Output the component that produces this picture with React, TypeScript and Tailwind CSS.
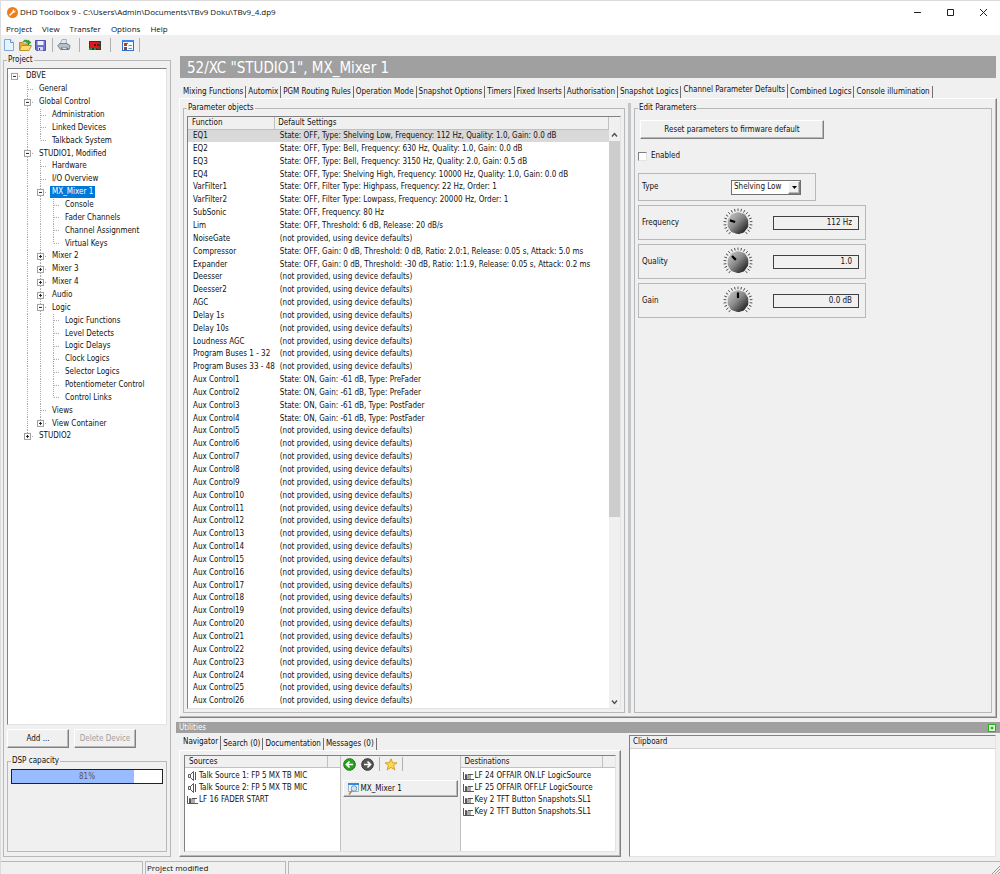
import { useState } from "react";
import type { ReactNode } from "react";

const raised =
  "border border-t-white border-l-white border-r-[#808080] border-b-[#808080] shadow-[inset_-1px_-1px_0_#b8b8b8]";
const sunken = "border border-t-[#808080] border-l-[#808080] border-r-[#e3e3e3] border-b-[#e3e3e3]";
const group = "min-w-0 border border-[#b8b8b8]";
const legendText = "px-px leading-[10px]";

type Node = { label: string; depth: number; state?: "open" | "closed"; last?: boolean };

const tree: Node[] = [
  { label: "DBVE", depth: 0, state: "open" },
  { label: "General", depth: 1 },
  { label: "Global Control", depth: 1, state: "open" },
  { label: "Administration", depth: 2 },
  { label: "Linked Devices", depth: 2 },
  { label: "Talkback System", depth: 2, last: true },
  { label: "STUDIO1, Modified", depth: 1, state: "open" },
  { label: "Hardware", depth: 2 },
  { label: "I/O Overview", depth: 2 },
  { label: "MX_Mixer 1", depth: 2, state: "open" },
  { label: "Console", depth: 3 },
  { label: "Fader Channels", depth: 3 },
  { label: "Channel Assignment", depth: 3 },
  { label: "Virtual Keys", depth: 3, last: true },
  { label: "Mixer 2", depth: 2, state: "closed" },
  { label: "Mixer 3", depth: 2, state: "closed" },
  { label: "Mixer 4", depth: 2, state: "closed" },
  { label: "Audio", depth: 2, state: "closed" },
  { label: "Logic", depth: 2, state: "open" },
  { label: "Logic Functions", depth: 3 },
  { label: "Level Detects", depth: 3 },
  { label: "Logic Delays", depth: 3 },
  { label: "Clock Logics", depth: 3 },
  { label: "Selector Logics", depth: 3 },
  { label: "Potentiometer Control", depth: 3 },
  { label: "Control Links", depth: 3, last: true },
  { label: "Views", depth: 2 },
  { label: "View Container", depth: 2, state: "closed", last: true },
  { label: "STUDIO2", depth: 1, state: "closed", last: true },
];

const none = "(not provided, using device defaults)";

const rows: [string, string][] = [
  ["EQ1", "State: OFF, Type: Shelving Low, Frequency: 112 Hz, Quality: 1.0, Gain: 0.0 dB"],
  ["EQ2", "State: OFF, Type: Bell, Frequency: 630 Hz, Quality: 1.0, Gain: 0.0 dB"],
  ["EQ3", "State: OFF, Type: Bell, Frequency: 3150 Hz, Quality: 2.0, Gain: 0.5 dB"],
  ["EQ4", "State: OFF, Type: Shelving High, Frequency: 10000 Hz, Quality: 1.0, Gain: 0.0 dB"],
  ["VarFilter1", "State: OFF, Filter Type: Highpass, Frequency: 22 Hz, Order: 1"],
  ["VarFilter2", "State: OFF, Filter Type: Lowpass, Frequency: 20000 Hz, Order: 1"],
  ["SubSonic", "State: OFF, Frequency: 80 Hz"],
  ["Lim", "State: OFF, Threshold: 6 dB, Release: 20 dB/s"],
  ["NoiseGate", none],
  ["Compressor", "State: OFF, Gain: 0 dB, Threshold: 0 dB, Ratio: 2.0:1, Release: 0.05 s, Attack: 5.0 ms"],
  ["Expander", "State: OFF, Gain: 0 dB, Threshold: -30 dB, Ratio: 1:1.9, Release: 0.05 s, Attack: 0.2 ms"],
  ["Deesser", none],
  ["Deesser2", none],
  ["AGC", none],
  ["Delay 1s", none],
  ["Delay 10s", none],
  ["Loudness AGC", none],
  ["Program Buses 1 - 32", none],
  ["Program Buses 33 - 48", none],
  ["Aux Control1", "State: ON, Gain: -61 dB, Type: PreFader"],
  ["Aux Control2", "State: ON, Gain: -61 dB, Type: PreFader"],
  ["Aux Control3", "State: ON, Gain: -61 dB, Type: PostFader"],
  ["Aux Control4", "State: ON, Gain: -61 dB, Type: PostFader"],
  ...Array.from({ length: 22 }, (_, i): [string, string] => [`Aux Control${i + 5}`, none]),
];

const tabs = [
  "Mixing Functions",
  "Automix",
  "PGM Routing Rules",
  "Operation Mode",
  "Snapshot Options",
  "Timers",
  "Fixed Inserts",
  "Authorisation",
  "Snapshot Logics",
  "Channel Parameter Defaults",
  "Combined Logics",
  "Console illumination",
];

const TreeGuide = ({ node }: { node: Node }) => {
  const cells = [];
  for (let i = 0; i <= node.depth; i++) {
    const own = i === node.depth;
    cells.push(
      <svg key={i} className="h-full w-[13px] shrink-0" aria-hidden="true">
        {i > 0 && (
          <line x1="6.5" y1="0" x2="6.5" y2={own && node.last ? "50%" : "100%"} stroke="#a8a8a8" strokeDasharray="1 1" />
        )}
        {own && <line x1="7" y1="50%" x2="13" y2="50%" stroke="#a8a8a8" strokeDasharray="1 1" />}
        {own && node.state && (
          <svg y="50%" overflow="visible">
            <rect x="3.5" y="-3" width="6" height="6" fill="#fff" stroke="#a0a0a0" />
            <path d="M5 0h3" stroke="#222" />
            {node.state === "closed" && <path d="M6.5 -1.5v3" stroke="#222" />}
          </svg>
        )}
      </svg>
    );
  }
  return <>{cells}</>;
};

const ProjectTree = () => (
  <div className={`flex-1 bg-white pt-px ${sunken}`}>
    <ul className="flex h-[373px] flex-col">
      {tree.map((node) => (
        <li key={node.label} className="flex min-h-0 flex-1 items-center">
          <TreeGuide node={node} />
          <span
            className={`ml-[3px] px-[2px] leading-3 whitespace-nowrap ${
              node.label === "MX_Mixer 1" ? "bg-[#0078d7] text-white" : ""
            }`}
          >
            {node.label}
          </span>
        </li>
      ))}
    </ul>
  </div>
);

const Separator = () => <span className="h-[14px] w-px bg-[#b0b0b0]" />;

const Toolbar = () => (
  <div className="flex h-5 items-center pl-[2px]">
    <button aria-label="New" className="w-4">
      <svg width="12" height="12" viewBox="0 0 12 12">
        <path d="M1.5.5h6l3 3v8h-9z" fill="#e6f2fd" stroke="#7fa9d6" />
        <path d="M7.5.5v3h3" fill="#fff" stroke="#5d8fc9" />
      </svg>
    </button>
    <button aria-label="Open" className="w-4">
      <svg width="13" height="12" viewBox="0 0 13 12">
        <path d="M.5 11V3.5h3l1 1.5h5V11z" fill="#e8b43a" stroke="#b98a26" />
        <path d="M.5 11.5l2-5h10l-2.500 5z" fill="#fbdc72" stroke="#c0922c" />
        <path d="M4 3c1-2.500 4-2.500 5-.5V1l3 2.500L9 6V4.500C8 3 6 2.500 4 3z" fill="#35a835" stroke="#1c7a1c" strokeWidth=".5" />
      </svg>
    </button>
    <button aria-label="Save" className="w-[17px]">
      <svg width="11" height="11" viewBox="0 0 11 11">
        <path d="M.5.5h10v10h-9l-1-1z" fill="#6f73cc" stroke="#4a4fae" />
        <path d="M2.500 1h6v4h-6z" fill="#eef" />
        <path d="M3 7h5v3.500H3z" fill="#d5d8f2" />
        <path d="M4 8h1v2H4z" fill="#3c40a0" />
      </svg>
    </button>
    <Separator />
    <button aria-label="Print" className="w-[26px] pl-1">
      <svg width="14" height="12" viewBox="0 0 14 12">
        <path d="M3 5l2-4.500h4.500L9 5z" fill="#dcebf8" stroke="#8a98a8" strokeWidth=".7" />
        <path d="M.7 6.500L3 4.500h7l3 2-.5 3.500-9 .6z" fill="#b9bdc4" stroke="#6d7278" strokeWidth=".8" />
        <path d="M4 8.500h6l2 2.500H5z" fill="#5c6670" />
        <path d="M5 8.800h4l1 1.500H6z" fill="#cfe3f6" />
      </svg>
    </button>
    <Separator />
    <button aria-label="Transfer" className="w-[30px] pl-[9px]">
      <svg width="12" height="9" viewBox="0 0 12 9">
        <path d="M0 0h12v9H0z" fill="#2d3b2d" />
        <path d="M1 1h7v6H1z" fill="#e01818" />
        <path d="M8 1h3v2H8zM8 5h3v3H8z" fill="#c02020" />
        <path d="M0 7h3v2H0zM5 7h2v2H5z" fill="#2a8c35" />
        <path d="M5 3h2v2H5z" fill="#521010" />
      </svg>
    </button>
    <Separator />
    <button aria-label="Preferences" className="w-7 pl-[11px]">
      <svg width="12" height="11" viewBox="0 0 12 11">
        <rect x=".5" y=".5" width="11" height="10" fill="#f4f8ff" stroke="#2a6fc9" />
        <path d="M0 0h12v2H0z" fill="#3f86dc" />
        <path d="M2 3h3v3H2zM2 7h3v3H2z" fill="#7a4a48" />
        <path d="M2 4l1 1 3-2" fill="none" stroke="#c23a24" />
        <path d="M6.500 5.500H10M6.500 8.500H10" stroke="#6c8fc0" />
      </svg>
    </button>
    <Separator />
  </div>
);

const Knob = ({ angle, id }: { angle: number; id: string }) => (
  <svg width="30" height="30" viewBox="-15 -15 30 30" aria-hidden="true">
    <defs>
      <linearGradient id={id} x1="0.1" y1="0.1" x2="0.9" y2="0.9">
        <stop offset="0" stopColor="#c0c0c0" />
        <stop offset=".45" stopColor="#8a8a8a" />
        <stop offset="1" stopColor="#1c1c1c" />
      </linearGradient>
    </defs>
    {Array.from({ length: 21 }, (_, i) => (
      <path
        key={i}
        d="M0 -11.800v-2.700"
        stroke="#333"
        strokeWidth=".8"
        transform={`rotate(${-140 + i * 14})`}
      />
    ))}
    <path
      d="M-3.500 -9.800Q0 -11.500 3.500 -9.800Q7 -9.500 8.500 -6Q11 -3 10.200 0Q11 4 8 6.500Q6.500 10 3 10.200Q0 12 -3.500 10Q-7.500 9.500 -8.500 6Q-11 3.500 -10.200 0Q-11 -3.500 -8 -6.300Q-7 -9.500 -3.500 -9.800Z"
      fill={`url(#${id})`}
    />
    <path d="M0 -8.500v5.500" stroke="#000" strokeWidth="2.200" transform={`rotate(${angle})`} />
  </svg>
);

const KnobRow = ({ label, angle, value }: { label: string; angle: number; value: string }) => {
  const id = `param-${label.toLowerCase()}`;
  return (
    <div className="flex h-[35px] w-[228px] items-center border border-[#b8b8b8] pl-[3px]">
      <label htmlFor={id} className="w-[81px]">
        {label}
      </label>
      <Knob angle={angle} id={`${id}-fill`} />
      <input
        id={id}
        readOnly
        defaultValue={value}
        className="ml-5 h-[14px] w-[86px] border border-[#404040] bg-[#f0f0f0] pr-[6px] text-right outline-none"
      />
    </div>
  );
};

const EditParameters = () => {
  const [type, setType] = useState("Shelving Low");
  return (
    <fieldset className={`ml-[3px] flex-1 pl-[3px] ${group}`}>
      <legend className={legendText}>Edit Parameters</legend>
      <button className={`mt-[7px] ml-[2px] block h-[19px] w-[184px] ${raised}`}>
        Reset parameters to firmware default
      </button>
      <label className="mt-3 flex items-center gap-1 leading-[10px]">
        <input type="checkbox" className={`size-[9px] appearance-none bg-white checked:bg-[#555] ${sunken}`} />
        Enabled
      </label>
      <div className="mt-3 flex flex-col gap-1">
        <div className="flex h-7 w-[178px] items-center border border-[#b8b8b8] pl-[3px]">
          <label htmlFor="param-type" className="w-[89px]">
            Type
          </label>
          <div className="relative">
            <select
              id="param-type"
              value={type}
              onChange={(e) => setType(e.target.value)}
              className="block h-[15px] w-[70px] appearance-none border border-[#707070] bg-white pl-[2px] leading-3 outline-none"
            >
              <option>Shelving Low</option>
              <option>Shelving High</option>
              <option>Bell</option>
            </select>
            <span className={`pointer-events-none absolute top-px right-px flex h-[13px] w-3 items-center justify-center bg-[#f0f0f0] ${raised}`}>
              <svg width="5" height="3">
                <path d="M0 0h5L2.500 3z" />
              </svg>
            </span>
          </div>
        </div>
        <KnobRow label="Frequency" angle={-72} value="112 Hz" />
        <KnobRow label="Quality" angle={-45} value="1.0" />
        <KnobRow label="Gain" angle={0} value="0.0 dB" />
      </div>
    </fieldset>
  );
};

const ParameterObjects = () => (
  <fieldset className={`flex w-[442px] shrink-0 px-[3px] pt-[3px] pb-[3px] ${group}`}>
    <legend className={legendText}>Parameter objects</legend>
    <div className={`flex h-full w-full bg-white ${sunken}`}>
      <table className="h-full flex-1 table-fixed border-collapse text-left">
        <thead>
          <tr className="h-3 bg-[#f0f0f0]">
            <th className="w-[84px] border-r border-b border-[#c0c0c0] p-0 pl-1 leading-[10px] font-normal">
              Function
            </th>
            <th className="border-r border-b border-[#c0c0c0] p-0 pl-[3px] leading-[10px] font-normal">
              Default Settings
            </th>
          </tr>
        </thead>
        <tbody>
          {rows.map(([name, settings], i) => (
            <tr key={name} className={i === 0 ? "bg-[#d9d9d9]" : ""}>
              <td className="p-0 pl-[5px] leading-[10px] whitespace-nowrap">{name}</td>
              <td className="p-0 pl-[5px] leading-[10px] whitespace-nowrap">{settings}</td>
            </tr>
          ))}
        </tbody>
      </table>
      <div className="flex w-[11px] flex-col items-center bg-[#f0f0f0] pt-3">
        <svg width="7" height="12" viewBox="0 0 7 12" className="shrink-0">
          <path d="M1 7.500l2.500-3 2.500 3" fill="none" stroke="#505050" strokeWidth="1.400" />
        </svg>
        <div className="h-[376px] w-full bg-[#cdcdcd]" />
        <div className="flex-1" />
        <svg width="7" height="12" viewBox="0 0 7 12" className="shrink-0">
          <path d="M1 4.500l2.500 3 2.500-3" fill="none" stroke="#505050" strokeWidth="1.400" />
        </svg>
      </div>
    </div>
  </fieldset>
);

const SpeakerIcon = () => (
  <svg width="9" height="10" viewBox="0 0 9 10" className="mr-[2px] ml-[3px] shrink-0">
    <path d="M.5 3.500h2v3h-2zM2.500 3.500L5.500.5v9l-3-3M7.500 1v8" fill="none" stroke="#444" strokeWidth=".9" />
  </svg>
);

const LogicIcon = () => (
  <svg width="11" height="8" viewBox="0 0 11 8" className="mr-px ml-[2px] shrink-0">
    <path d="M.5 0v7.500H11M2.500 7V2.500h1V7M5 7V2.500h2V7M7 2.500h3" fill="none" stroke="#444" strokeWidth=".9" />
  </svg>
);

const ListHeader = ({ children }: { children: ReactNode }) => (
  <div className="flex h-3 border-b border-[#c0c0c0] bg-[#f0f0f0]">
    <span className="flex-1 border-r border-[#c0c0c0] pl-1 leading-3">{children}</span>
    <span className="w-3" />
  </div>
);

const Navigator = () => (
  <div className={`flex h-[107px] p-1 ${raised}`}>
    <div className={`flex flex-1 bg-[#f0f0f0] ${sunken} border-b-[#b8b8b8] border-r-[#b8b8b8]`}>
      <div className="flex-1 bg-white">
        <ListHeader>Sources</ListHeader>
        <ul className="pt-[2px] leading-3 whitespace-nowrap">
          <li className="flex items-center"><SpeakerIcon />Talk Source 1: FP 5 MX TB MIC</li>
          <li className="flex items-center"><SpeakerIcon />Talk Source 2: FP 5 MX TB MIC</li>
          <li className="flex items-center"><LogicIcon />LF 16 FADER START</li>
        </ul>
      </div>
      <div className="w-[121px] border-x border-[#c0c0c0] px-[2px]">
        <div className="flex h-4 items-center">
          <button aria-label="Back" className="w-[18px]">
            <svg width="13" height="13" viewBox="0 0 13 13">
              <circle cx="6.500" cy="6.500" r="5.800" fill="#25a51c" stroke="#14750f" />
              <path d="M10 6.500H4M6.500 3.500l-3 3 3 3" fill="none" stroke="#fff" strokeWidth="1.700" />
            </svg>
          </button>
          <button aria-label="Forward" className="w-[18px]">
            <svg width="13" height="13" viewBox="0 0 13 13">
              <circle cx="6.500" cy="6.500" r="5.800" fill="#555" stroke="#2f2f2f" />
              <path d="M3 6.500h6M6.500 3.500l3 3-3 3" fill="none" stroke="#fff" strokeWidth="1.700" />
            </svg>
          </button>
          <Separator />
          <button aria-label="Favourites" className="w-[22px] pl-1">
            <svg width="14" height="13" viewBox="0 0 14 13">
              <path d="M7 .8l1.700 4h4.300L9.600 7.500l1.300 4.500L7 9.400 3.100 12l1.300-4.500L1 4.800h4.300z" fill="#fcd84a" stroke="#d39a1e" strokeWidth=".9" />
            </svg>
          </button>
          <Separator />
        </div>
        <button className={`mt-2 flex h-[17px] w-full items-center gap-[2px] pl-1 ${raised}`}>
          <svg width="11" height="12" viewBox="0 0 11 12">
            <path d="M.5.5h10v8H.5z" fill="#f3f8fd" stroke="#9bb4cc" />
            <path d="M0 0h11v2H0z" fill="#2f8be0" />
            <circle cx="6" cy="5.500" r="2.800" fill="#cfe6f8" stroke="#7795b0" />
            <path d="M4 7.500L1 11.500" stroke="#b08a50" strokeWidth="1.500" />
          </svg>
          MX_Mixer 1
        </button>
      </div>
      <div className="flex-1 bg-white">
        <ListHeader>Destinations</ListHeader>
        <ul className="pt-[2px] leading-3 whitespace-nowrap">
          <li className="flex items-center"><LogicIcon />LF 24 OFFAIR ON.LF LogicSource</li>
          <li className="flex items-center"><LogicIcon />LF 25 OFFAIR OFF.LF LogicSource</li>
          <li className="flex items-center"><LogicIcon />Key 2 TFT Button Snapshots.SL1</li>
          <li className="flex items-center"><LogicIcon />Key 2 TFT Button Snapshots.SL1</li>
        </ul>
      </div>
    </div>
  </div>
);

const TabStrip = ({ items, active }: { items: string[]; active: string }) => (
  <div role="tablist" className="flex h-[14px] items-end pl-[2px]">
    {items.map((item) => (
      <button
        key={item}
        role="tab"
        aria-selected={item === active}
        className={`border-r border-[#707070] px-[2px] leading-3 whitespace-nowrap ${item === active ? "h-[14px] pb-[2px]" : "h-3"}`}
      >
        {item}
      </button>
    ))}
  </div>
);

const App = () => {
  return (
    <div className="flex h-screen flex-col overflow-hidden border-t border-l border-[#dcdcdc] bg-[#f0f0f0] font-['DejaVu_Sans_Condensed','Open_Sans',sans-serif] text-[8px] leading-3 text-[#111]">
      <header className="bg-white font-['Open_Sans',sans-serif]">
        <div className="flex h-[22px] items-center pl-[6px]">
          <svg width="11" height="11" viewBox="0 0 11 11" className="mr-[2px]">
            <circle cx="5.500" cy="5.500" r="5.500" fill="#ee7d1a" />
            <path d="M3 8l3-3" stroke="#fff" strokeWidth="1.500" strokeLinecap="round" />
            <path d="M5.500 3.500a1.800 1.800 0 0 1 2-1L6.700 3.500l.8.8 1-.8a1.800 1.800 0 0 1-2.500 2z" fill="#fff" />
          </svg>
          <h1 className="flex-1">DHD Toolbox 9 - C:\Users\Admin\Documents\TBv9 Doku\TBv9_4.dp9</h1>
          <div className="flex gap-6 pr-3">
            <button aria-label="Minimise">
              <svg width="9" height="9"><path d="M1 4.500h7" stroke="#222" /></svg>
            </button>
            <button aria-label="Maximise">
              <svg width="9" height="9"><path d="M1.500 1.500h6v6h-6z" fill="none" stroke="#222" /></svg>
            </button>
            <button aria-label="Close">
              <svg width="9" height="9"><path d="M1 1l7 7M8 1l-7 7" stroke="#222" /></svg>
            </button>
          </div>
        </div>
        <nav className="flex h-3 gap-[10px] pl-[5px]">
          {["Project", "View", "Transfer", "Options", "Help"].map((item) => (
            <button key={item}>{item}</button>
          ))}
        </nav>
      </header>
      <Toolbar />
      <main className="flex min-h-0 flex-1 pb-1">
        <fieldset className={`ml-[2px] flex w-[168px] shrink-0 px-[3px] pt-[3px] pb-1 ${group}`}>
          <legend className={legendText}>Project</legend>
          <div className="flex h-full w-full flex-col">
            <ProjectTree />
            <div className="flex gap-[5px] pt-1">
              <button className={`h-[19px] w-[62px] ${raised}`}>Add ...</button>
              <button disabled className={`h-[19px] w-[62px] text-[#a0a0a0] ${raised}`}>
                Delete Device
              </button>
            </div>
            <fieldset className={`mt-2 h-[96px] px-[3px] pt-[3px] ${group}`}>
              <legend className={legendText}>DSP capacity</legend>
              <div role="progressbar" aria-valuenow={81} className="grid h-[15px] border border-[#222] bg-white">
                <div className="col-start-1 row-start-1 bg-[#99bbff]" style={{ width: "81%" }} />
                <span className="col-start-1 row-start-1 text-center leading-[13px] text-[#555]">81%</span>
              </div>
            </fieldset>
          </div>
        </fieldset>
        <div className="ml-[5px] flex min-w-0 flex-1 flex-col">
          <h2 className="mt-px mr-1 ml-1 h-[22px] bg-[#a0a0a0] pl-[7px] text-[15px] leading-[24px] text-white">
            52/XC "STUDIO1", MX_Mixer 1
          </h2>
          <div className="mt-[6px] ml-[3px]">
            <TabStrip items={tabs} active="Channel Parameter Defaults" />
          </div>
          <section className={`mr-[3px] ml-[3px] flex min-h-0 flex-1 py-1 pr-1 pl-[3px] ${raised}`}>
            <ParameterObjects />
            <div className="ml-[3px] w-[3px] bg-[#c4c7ca]" />
            <EditParameters />
          </section>
          <div className="mt-1 flex h-[11px] items-center justify-between bg-[#a0a0a0] pr-1 pl-[3px] text-white">
            Utilities
            <button aria-label="Toggle utilities">
              <svg width="8" height="8">
                <path d="M.5.5h7v7h-7z" fill="#d9ffd0" stroke="#1fb413" />
                <path d="M3 3h2v2H3z" fill="#1fb413" stroke="#1fb413" strokeWidth=".5" />
              </svg>
            </button>
          </div>
          <div className="flex pt-[2px]">
            <div className="ml-[3px] w-[442px] pt-px">
              <TabStrip items={["Navigator", "Search (0)", "Documentation", "Messages (0)"]} active="Navigator" />
              <Navigator />
            </div>
            <section className={`mr-1 ml-2 flex-1 bg-white ${sunken}`}>
              <h3 className="h-[13px] border-b border-[#d0d0d0] bg-[#f0f0f0] pl-[3px]">Clipboard</h3>
            </section>
          </div>
        </div>
      </main>
      <footer className="flex h-[13px] gap-[2px] leading-3">
        <div className="w-[142px] border-t border-r border-[#b8b8b8]" />
        <div className="w-[141px] border-x border-t border-[#b8b8b8] pl-px font-['Open_Sans',sans-serif]">
          Project modified
        </div>
        <div className="flex flex-1 items-end justify-end border-t border-l border-[#b8b8b8]">
          <svg width="9" height="9">
            <path d="M1 9l8-8M4 9l5-5M7 9l2-2" stroke="#999" />
          </svg>
        </div>
      </footer>
    </div>
  );
};

export default App;
